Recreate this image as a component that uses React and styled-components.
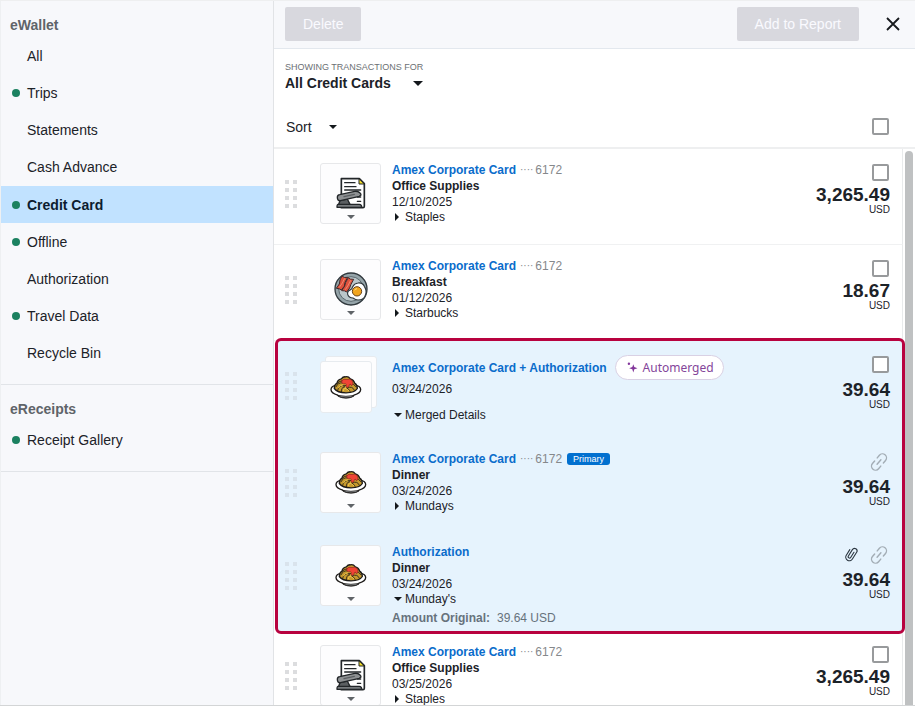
import React from "react";
import styled, { createGlobalStyle, css } from "styled-components";

const color = {
  ink: "#1c2228",
  muted: "#85888b",
  blue: "#0a6ccb",
  line: "#e6e8ea",
  panel: "#f7f8fb",
  green: "#1b8160",
  crimson: "#b8023f",
};

const GlobalStyle = createGlobalStyle`
  *, *::before, *::after { box-sizing: border-box; }
  body {
    margin: 0;
    background: #fff;
    color: ${color.ink};
    font-family: "Liberation Sans", Arial, sans-serif;
    font-size: 12px;
    line-height: 16px;
  }
  button, input, select { font: inherit; color: inherit; }
  a { text-decoration: none; }
`;

const Page = styled.div`
  display: flex;
  height: 100vh;
  overflow: hidden;
  border-top: 1px solid #eeeff0;
  border-bottom: 1px solid #d3d5d6;
`;

/* Sidebar */
const Sidebar = styled.nav`
  flex: 0 0 274px;
  background: ${color.panel};
  border-right: 1px solid #e1e3e6;
  border-left: 1px solid #eef0f2;
`;

const NavSection = styled.section`
  padding: 12px 0 13px;
  border-bottom: 1px solid #e1e4e8;
`;

const NavHeading = styled.h2`
  margin: 0;
  padding: 4px 9px;
  font-size: 14px;
  line-height: 16px;
  color: #5f6469;
`;

const NavList = styled.ul`
  margin: 0;
  padding: 0;
  list-style: none;
`;

const NavLink = styled.a`
  display: flex;
  align-items: center;
  gap: 7px;
  height: 37px;
  padding-left: 11px;
  font-size: 14px;
  color: ${color.ink};
  ${(p) =>
    p.$active &&
    css`
      margin-top: 1px;
      background: #c1e2ff;
      font-weight: 700;
      color: #0c1c2e;
    `}
`;

const StatusDot = styled.span`
  width: 8px;
  height: 8px;
  border-radius: 50%;
  background: ${(p) => (p.$on ? color.green : "transparent")};
`;

/* Main column */
const Main = styled.main`
  flex: 1;
  min-width: 0;
  display: flex;
  flex-direction: column;
`;

const Toolbar = styled.header`
  display: flex;
  align-items: center;
  gap: 12px;
  padding: 6px 11px 7px;
  background: ${color.panel};
  border-bottom: 1px solid #e3e8ee;
`;

const ToolbarSpacer = styled.div`
  flex: 1;
`;

const ToolbarButton = styled.button`
  height: 34px;
  padding: 0 18px;
  border: 0;
  border-radius: 2px;
  background: #d8d8de;
  color: #fafaff;
  font-size: 14px;
`;

const CloseButton = styled.button`
  display: flex;
  align-items: center;
  justify-content: center;
  width: 22px;
  height: 22px;
  margin-left: 11px;
  padding: 0;
  border: 0;
  background: transparent;
`;

const Filters = styled.section`
  padding: 12px 25px 12px 11px;
  border-bottom: 2px solid #eeeff0;
`;

const FilterLabel = styled.label`
  display: block;
  font-size: 9px;
  line-height: 12px;
  color: #6c7074;
`;

const SelectWrap = styled.div`
  display: inline-flex;
  align-items: center;
  position: relative;
`;

const CardSelect = styled.select`
  appearance: none;
  height: 20px;
  padding: 0 32px 0 0;
  border: 0;
  background: transparent;
  font-size: 14px;
  font-weight: 700;
`;

const SelectCaret = styled.span`
  position: absolute;
  right: 0;
  display: flex;
  pointer-events: none;
`;

const SortBar = styled.div`
  display: flex;
  align-items: center;
  justify-content: space-between;
  margin-top: 25px;
`;

const SortButton = styled.button`
  display: flex;
  align-items: center;
  gap: 17px;
  padding: 0 1px;
  border: 0;
  background: transparent;
  font-size: 14px;
`;

const Checkbox = styled.input.attrs({ type: "checkbox" })`
  appearance: none;
  width: 17px;
  height: 17px;
  margin: 0 1px 0 0;
  border: 2px solid #989a9c;
  border-radius: 2px;
  background: #fff;
  &:checked { background: ${color.blue}; }
`;

/* Transactions */
const Scroller = styled.div`
  flex: 1;
  min-height: 0;
  display: flex;
`;

const List = styled.div`
  flex: 1;
  min-width: 0;
  overflow: hidden;
`;

const Track = styled.div`
  flex: 0 0 10px;
  padding: 2px 2px 0 0;
`;

const Thumb = styled.div`
  height: 100%;
  border-radius: 4px 4px 0 0;
  background: #bfc1c2;
`;

const rowGrid = css`
  display: grid;
  grid-template-columns: 35px 72px 1fr auto;
  align-items: start;
`;

const Row = styled.article`
  ${rowGrid}
  min-height: 96px;
  margin-right: 2px;
  padding: 13px 12px 0 11px;
  border-bottom: 1px solid #f0f1f2;
  border-right: 1px solid #e9ebec;
`;

const MergedGroup = styled.section`
  position: relative;
  margin: -3px 0 -3px 1px;
  border: 3px solid ${color.crimson};
  border-radius: 6px;
  background: #e6f3fd;
`;

const GroupRow = styled.article`
  ${rowGrid}
  min-height: ${(p) => p.$height}px;
  padding: 13px 12px 0 7px;
`;

const Grip = styled.span`
  display: grid;
  grid-template-columns: 4px 4px;
  gap: 4px;
  width: 12px;
  margin-top: 18px;
`;

const GripDot = styled.i`
  height: 4px;
  background: ${(p) => (p.$faint ? "#d9e3ec" : "#dcdddf")};
`;

const Tile = styled.button`
  display: flex;
  flex-direction: column;
  align-items: center;
  justify-content: space-between;
  width: 61px;
  height: 61px;
  margin-top: 1px;
  padding: 12px 0 4px;
  border: 1px solid #e7e8ea;
  border-radius: 3px;
  background: #fdfdfe;
`;

const Picture = styled.span`
  display: flex;
  align-items: center;
  justify-content: center;
  height: 34px;
`;

const Stack = styled.button`
  position: relative;
  width: 57px;
  height: 57px;
  margin-top: 2px;
  padding: 0;
  border: 0;
  background: transparent;
`;

const StackCard = styled.span`
  position: absolute;
  display: flex;
  align-items: center;
  justify-content: center;
  width: 52px;
  height: 52px;
  border: 1px solid #e7ebef;
  border-radius: 3px;
  background: #fdfdfe;
  ${(p) => (p.$back ? "top: 0; right: 0;" : "bottom: 0; left: 0;")}
`;

const Details = styled.div`
  display: flex;
  flex-direction: column;
  align-items: flex-start;
`;

const TitleLine = styled.div`
  display: flex;
  align-items: center;
  height: ${(p) => (p.$tall ? 27 : 16)}px;
`;

const CardLink = styled.a`
  font-weight: 700;
  color: ${color.blue};
`;

const CardDots = styled.span`
  margin: 0 2px 0 4px;
  font-size: 10px;
  color: ${color.muted};
`;

const CardNumber = styled.span`
  color: ${color.muted};
`;

const PrimaryBadge = styled.span`
  margin-left: 5px;
  padding: 0 6px;
  border-radius: 3px;
  background: #0270cf;
  color: #fff;
  font-size: 9px;
  line-height: 12px;
`;

const AutoPill = styled.span`
  display: flex;
  align-items: center;
  gap: 5px;
  height: 25px;
  margin-left: 8px;
  padding: 0 9px 0 11px;
  border: 1px solid #d9d1e4;
  border-radius: 13px;
  background: #fff;
  color: #84459a;
  font-family: "Noto Sans", sans-serif;
  font-size: 12px;
`;

const Expense = styled.strong``;

const Toggle = styled.button`
  display: flex;
  align-items: center;
  margin-top: ${(p) => (p.$spaced ? 11 : 0)}px;
  padding: 0;
  border: 0;
  background: transparent;
  line-height: 14px;
`;

const ToggleMark = styled.span`
  display: flex;
  width: 13px;
  padding-left: 2px;
`;

const Original = styled.div`
  margin-top: 4px;
  color: #66727c;
  & > b { margin-right: 7px; }
`;

const Amounts = styled.div`
  display: flex;
  flex-direction: column;
  align-items: flex-end;
  padding-top: 2px;
`;

const Actions = styled.div`
  display: flex;
  align-items: center;
  gap: 8px;
  height: 17px;
  margin-bottom: ${(p) => (p.$grouped ? 7 : 4)}px;
`;

const IconButton = styled.button`
  display: flex;
  padding: 0 2px;
  border: 0;
  background: transparent;
  color: ${(p) => (p.$dark ? "#2b3640" : "#a3adb5")};
`;

const Sum = styled.span`
  font-size: 19px;
  font-weight: 700;
  line-height: 20px;
`;

const Currency = styled.span`
  font-size: 10px;
  line-height: 9px;
`;

/* Drawings */
const Down = ({ w = 8, h = 4, fill = "#14181c" }) => (
  <svg width={w} height={h} viewBox="0 0 8 4" aria-hidden="true">
    <path d="M0 0h8L4 4z" fill={fill} />
  </svg>
);

const Right = () => (
  <svg width="5" height="8" viewBox="0 0 5 8" aria-hidden="true">
    <path d="M1 0v8l4-4z" fill="#14181c" />
  </svg>
);

const Cross = () => (
  <svg width="14" height="14" viewBox="0 0 14 14" aria-hidden="true">
    <path d="M1 1l12 12M13 1L1 13" stroke="#171a1d" strokeWidth="1.8" fill="none" />
  </svg>
);

const Sparkle = () => (
  <svg width="11" height="11" viewBox="0 0 11 11" fill="#83379b" aria-hidden="true">
    <path d="M6.3 2.2l1 2.9 3.2 1.1-3.2 1.1-1 3.1-1-3.1-3.1-1.1 3.1-1.1z" />
    <circle cx="1.9" cy="1.7" r="1.2" />
  </svg>
);

const Clip = () => (
  <svg width="14" height="17" viewBox="0 0 14 17" fill="none" stroke="currentColor" strokeWidth="1.1" strokeLinecap="round" aria-hidden="true">
    <g transform="rotate(32 7 8.5)">
      <path d="M3.4 5v6.6a3.6 3.6 0 0 0 7.2 0V3.6a2.5 2.5 0 0 0-5 0v7.6a1.3 1.3 0 0 0 2.7 0V5" />
    </g>
  </svg>
);

const Chain = () => (
  <svg width="18" height="18" viewBox="0 0 18 18" fill="none" stroke="currentColor" strokeWidth="1.4" strokeLinecap="round" aria-hidden="true">
    <g transform="rotate(-50 9 9)">
      <path d="M7 5H3.6a4 4 0 0 0 0 8H7M11 5h3.4a4 4 0 0 1 0 8H11M6 9h6" />
    </g>
  </svg>
);

const Stapler = () => (
  <svg width="30" height="32" viewBox="60 65 90 96" strokeLinejoin="round" strokeLinecap="round" aria-hidden="true">
    <path d="M76 70h54l15 15v68q0 4-4 4H76z" fill="#fff" stroke="#222629" strokeWidth="5" />
    <path d="M129 71v15h15z" fill="#f2dc25" stroke="#222629" strokeWidth="3" />
    <path d="M86 82h31M86 94h34M86 104h48M124 125h10M124 138h10" stroke="#222629" strokeWidth="4" />
    <path d="M66 147h64q7 0 7 9H63q0-9 3-9z" fill="#777b7e" stroke="#222629" strokeWidth="4" />
    <path d="M72 136l22-5 8 16H68z" fill="#5b5f62" stroke="#222629" strokeWidth="4" />
    <path d="M64 126q0-7 7-8l45-10q8-1 14 3 5 3 5 8l-5 4-57 13q-9 1-9-10z" fill="#8e9193" stroke="#222629" strokeWidth="4" />
    <path d="M84 124l31-7" stroke="#5b5f62" strokeWidth="4" />
  </svg>
);

const Breakfast = () => (
  <svg width="34" height="34" viewBox="54 53 102 102" strokeLinejoin="round" aria-hidden="true">
    <circle cx="105" cy="104" r="48" fill="#95a4a9" stroke="#30383d" strokeWidth="4" />
    <circle cx="105" cy="104" r="37" fill="#bac6ca" stroke="#5a686e" strokeWidth="3" />
    <path d="M78 65q6 7 17 4l-8 15-2 12-9 11q-6-5-15-5l9-13 2-12z" fill="#df513d" stroke="#402a2a" strokeWidth="3" />
    <path d="M97 70q5 6 16 5l-8 15-4 11-9 12q-6-5-15-4l9-14 3-11z" fill="#df513d" stroke="#402a2a" strokeWidth="3" />
    <path d="M86 72l-7 14-9 13M104 78l-7 14-9 14" stroke="#f8a98b" strokeWidth="2" fill="none" />
    <path d="M126 86q13-2 19 10 8 12 4 24-4 17-23 17-7 0-15-6-13-1-16-11-2-10 9-14 4-1 6-9 5-10 16-11z" fill="#fff" stroke="#30383d" strokeWidth="3.5" />
    <circle cx="123" cy="111" r="14" fill="#f2a51d" stroke="#69441b" strokeWidth="3" />
    <path d="M116 108q2-5 7-5" fill="none" stroke="#ffe087" strokeWidth="3" />
  </svg>
);

const Spaghetti = () => (
  <svg width="32" height="24" viewBox="44 75 96 71" strokeLinejoin="round" strokeLinecap="round" aria-hidden="true">
    <path d="M47 118q0-10 17-13h55q17 3 17 13 0 11-20 17-4 7-24 8-21-1-25-8-20-6-20-17z" fill="#fff" stroke="#1d1b19" strokeWidth="4" />
    <path d="M68 136q24 5 48 0-7 7-24 7t-24-7z" fill="#a7adb0" stroke="#1d1b19" strokeWidth="2.5" />
    <path d="M57 115q0-12 8-16 1-10 13-13 5-7 13-6 8-2 14 6 11 3 13 13 8 5 8 16-8 13-34 13t-35-13z" fill="#c79a2d" stroke="#1d1b19" strokeWidth="4" />
    <path d="M66 99q7-8 17-7M62 110q6-14 20-12M67 120q3-16 20-14M78 125q-2-12 14-20M105 126q-4-14-20-15M117 120q-6-14-20-7M121 109q-5-10-14-7" fill="none" stroke="#1d1b19" strokeWidth="2.5" />
    <path d="M69 113q5-9 14-9M84 122q0-8 8-12M101 122q-5-6-12-8" fill="none" stroke="#efc64e" strokeWidth="3" />
    <path d="M79 92q6-8 16-4l8-1q9 2 9 9 3 8-2 10-4 0-5-4-4 0-4 6-2 5-7 3-4-3-1-8-2-4-8-2-8-1-6-9z" fill="#f04435" stroke="#8b241f" strokeWidth="2" />
  </svg>
);

const pictures = { stapler: Stapler, breakfast: Breakfast, spaghetti: Spaghetti };

function DragGrip({ faint }) {
  return (
    <Grip aria-hidden="true">
      {Array.from({ length: 8 }, (_, i) => (
        <GripDot key={i} $faint={faint} />
      ))}
    </Grip>
  );
}

function PictureTile({ kind }) {
  const Art = pictures[kind];
  return (
    <Tile aria-label="Change expense type">
      <Picture>
        <Art />
      </Picture>
      <Down fill="#606468" />
    </Tile>
  );
}

function Vendor({ open, spaced, children }) {
  return (
    <Toggle aria-expanded={!!open} $spaced={spaced}>
      <ToggleMark>{open ? <Down /> : <Right />}</ToggleMark>
      {children}
    </Toggle>
  );
}

function Total({ value, grouped, children }) {
  return (
    <Amounts>
      <Actions $grouped={grouped}>{children}</Actions>
      <Sum>{value}</Sum>
      <Currency>USD</Currency>
    </Amounts>
  );
}

const Unlink = () => (
  <IconButton aria-label="Unlink">
    <Chain />
  </IconButton>
);

function CardTitle({ primary }) {
  return (
    <TitleLine>
      <CardLink href="#card">Amex Corporate Card</CardLink>
      <CardDots>····</CardDots>
      <CardNumber>6172</CardNumber>
      {primary && <PrimaryBadge>Primary</PrimaryBadge>}
    </TitleLine>
  );
}

function Transaction({ kind, expense, date, vendor, amount }) {
  return (
    <Row>
      <DragGrip />
      <PictureTile kind={kind} />
      <Details>
        <CardTitle />
        <Expense>{expense}</Expense>
        <span>{date}</span>
        <Vendor>{vendor}</Vendor>
      </Details>
      <Total value={amount}>
        <Checkbox aria-label={`Select ${expense} ${date}`} />
      </Total>
    </Row>
  );
}

const sections = [
  {
    title: "eWallet",
    items: [
      ["All", false],
      ["Trips", true],
      ["Statements", false],
      ["Cash Advance", false],
      ["Credit Card", true],
      ["Offline", true],
      ["Authorization", false],
      ["Travel Data", true],
      ["Recycle Bin", false],
    ],
  },
  { title: "eReceipts", items: [["Receipt Gallery", true]] },
];

export default function App() {
  return (
    <>
      <GlobalStyle />
      <Page>
        <Sidebar aria-label="Wallet">
          {sections.map((s) => (
            <NavSection key={s.title}>
              <NavHeading>{s.title}</NavHeading>
              <NavList>
                {s.items.map(([name, on]) => (
                  <li key={name}>
                    <NavLink href="#list" $active={name === "Credit Card"}>
                      <StatusDot $on={on} />
                      {name}
                    </NavLink>
                  </li>
                ))}
              </NavList>
            </NavSection>
          ))}
        </Sidebar>
        <Main>
          <Toolbar>
            <ToolbarButton disabled>Delete</ToolbarButton>
            <ToolbarSpacer />
            <ToolbarButton disabled>Add to Report</ToolbarButton>
            <CloseButton aria-label="Close">
              <Cross />
            </CloseButton>
          </Toolbar>
          <Filters>
            <FilterLabel htmlFor="cards">SHOWING TRANSACTIONS FOR</FilterLabel>
            <SelectWrap>
              <CardSelect id="cards">
                <option>All Credit Cards</option>
              </CardSelect>
              <SelectCaret>
                <Down w={10} h={5} />
              </SelectCaret>
            </SelectWrap>
            <SortBar>
              <SortButton aria-haspopup="menu">
                Sort
                <Down />
              </SortButton>
              <Checkbox aria-label="Select all" />
            </SortBar>
          </Filters>
          <Scroller>
            <List>
              <Transaction kind="stapler" expense="Office Supplies" date="12/10/2025" vendor="Staples" amount="3,265.49" />
              <Transaction kind="breakfast" expense="Breakfast" date="01/12/2026" vendor="Starbucks" amount="18.67" />
              <MergedGroup>
                <GroupRow $height={97}>
                  <DragGrip faint />
                  <Stack aria-label="Change expense type">
                    <StackCard $back />
                    <StackCard>
                      <Spaghetti />
                    </StackCard>
                  </Stack>
                  <Details>
                    <TitleLine $tall>
                      <CardLink href="#card">Amex Corporate Card + Authorization</CardLink>
                      <AutoPill>
                        <Sparkle />
                        Automerged
                      </AutoPill>
                    </TitleLine>
                    <span>03/24/2026</span>
                    <Vendor open spaced>
                      Merged Details
                    </Vendor>
                  </Details>
                  <Total value="39.64" grouped>
                    <Checkbox aria-label="Select merged transaction" />
                  </Total>
                </GroupRow>
                <GroupRow $height={93}>
                  <DragGrip faint />
                  <PictureTile kind="spaghetti" />
                  <Details>
                    <CardTitle primary />
                    <Expense>Dinner</Expense>
                    <span>03/24/2026</span>
                    <Vendor>Mundays</Vendor>
                  </Details>
                  <Total value="39.64" grouped>
                    <Unlink />
                  </Total>
                </GroupRow>
                <GroupRow $height={100}>
                  <DragGrip faint />
                  <PictureTile kind="spaghetti" />
                  <Details>
                    <TitleLine>
                      <CardLink href="#authorization">Authorization</CardLink>
                    </TitleLine>
                    <Expense>Dinner</Expense>
                    <span>03/24/2026</span>
                    <Vendor open>Munday's</Vendor>
                    <Original>
                      <b>Amount Original:</b>39.64 USD
                    </Original>
                  </Details>
                  <Total value="39.64" grouped>
                    <IconButton $dark aria-label="Attachment">
                      <Clip />
                    </IconButton>
                    <Unlink />
                  </Total>
                </GroupRow>
              </MergedGroup>
              <Transaction kind="stapler" expense="Office Supplies" date="03/25/2026" vendor="Staples" amount="3,265.49" />
            </List>
            <Track>
              <Thumb />
            </Track>
          </Scroller>
        </Main>
      </Page>
    </>
  );
}
